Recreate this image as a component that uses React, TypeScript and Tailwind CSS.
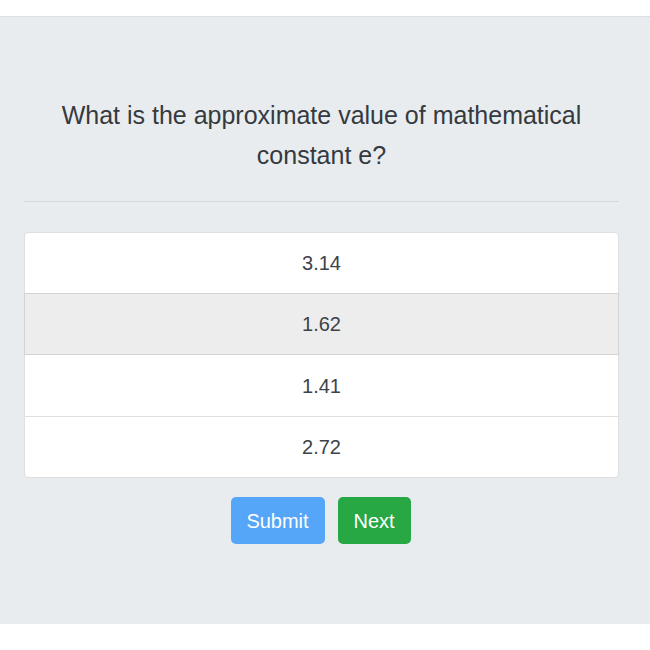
export default function App() {
  const options = ["3.14", "1.62", "1.41", "2.72"];
  const hovered = 1;

  return (
    <div className="min-h-[650px] bg-white pt-4" style={{ fontFamily: '"Liberation Sans", Arial, sans-serif' }}>
      {/* --- QUIZ PANEL --- */}
      <div className="bg-[#e9ecef] border-t border-[#dcdfe3] pl-6 pr-[31px] pt-[78px] pb-[80px]">
        <h3 className="text-center text-[25px] leading-[40px] text-[#343a40] px-6">
          What is the approximate value of mathematical constant e?
        </h3>
        <hr className="mt-[26px] mb-[30px] border-t border-[#d5d8db]" />

        <ul className="flex flex-col bg-white rounded-[4px] border border-[#dfdfdf]">
          {options.map((opt, i) => (
            <li
              key={opt}
              className={
                "flex items-center justify-center text-[20px] text-[#3d434a] " +
                (i === 0 ? "h-[60px] rounded-t-[4px] " : "border-t ") +
                (i === hovered
                  ? "bg-[#ededed] border-[#d3d3d3] -mx-px px-px border-x border-b relative z-10 h-[62px] -mb-px"
                  : i === 2
                    ? "h-[62px] border-[#dfdfdf]"
                    : i > 0
                      ? "h-[61px] border-[#dfdfdf]"
                      : "") +
                (i === options.length - 1 ? " rounded-b-[4px]" : "")
              }
            >
              {opt}
            </li>
          ))}
        </ul>

        {/* --- ACTIONS --- */}
        <div className="flex justify-center gap-[13px] mt-[19px] pr-[2px]">
          <button className="h-[47px] w-[94px] rounded-[5px] bg-[#55a6f8] text-white text-[20px]">
            Submit
          </button>
          <button className="h-[47px] w-[73px] rounded-[5px] bg-[#28a745] text-white text-[20px]">
            Next
          </button>
        </div>
      </div>
    </div>
  );
}
